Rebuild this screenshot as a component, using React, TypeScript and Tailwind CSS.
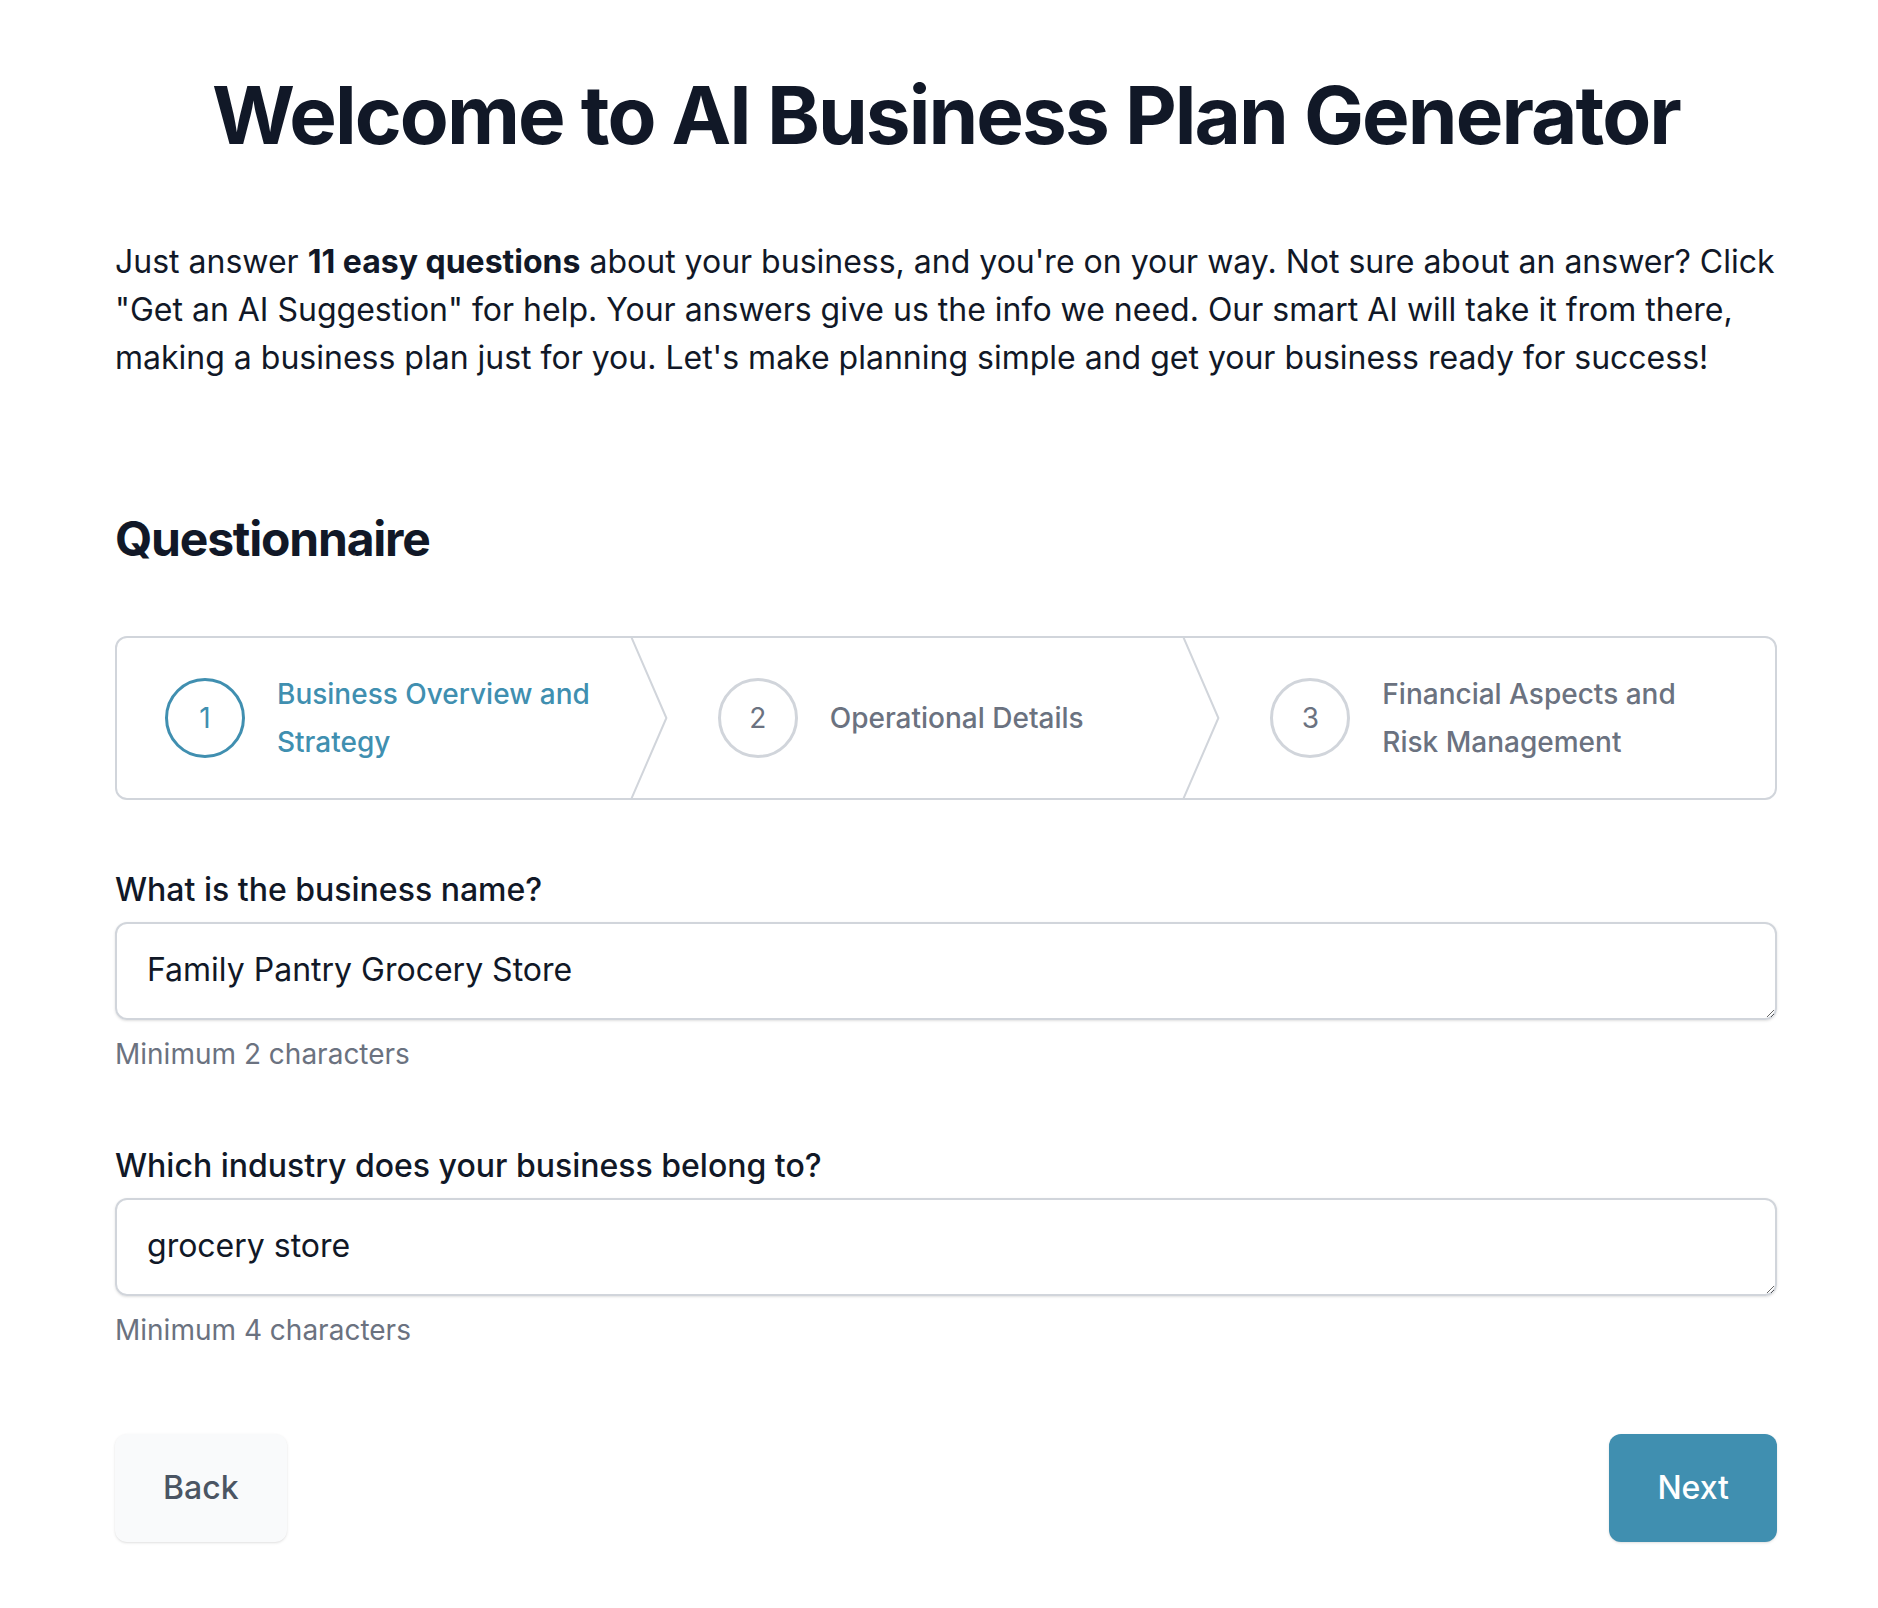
import React from "react";

const font = { fontFamily: "Inter, 'Noto Sans', sans-serif" };

function Chevron() {
  return (
    <div className="absolute top-0 right-0 h-full w-[40px]" aria-hidden="true">
      <svg className="h-full w-full text-[#d1d5db]" viewBox="0 0 22 80" fill="none" preserveAspectRatio="none">
        <path d="M0 -2L20 40L0 82" vectorEffect="non-scaling-stroke" stroke="currentColor" strokeWidth={2} strokeLinejoin="round" />
      </svg>
    </div>
  );
}

function Step({ n, label, active, last }: { n: number; label: string; active?: boolean; last?: boolean }) {
  return (
    <li className="relative flex flex-1">
      <div className="flex items-center px-[48px] py-[32px]">
        <span
          className={
            active
              ? "flex h-[80px] w-[80px] shrink-0 items-center justify-center rounded-full border-[3px] border-[#408fb0] text-[28px] text-[#408fb0]"
              : "flex h-[80px] w-[80px] shrink-0 items-center justify-center rounded-full border-[3px] border-[#d1d5db] text-[28px] text-[#6b7280]"
          }
        >
          {n}
        </span>
        <span
          className={
            active
              ? "ml-[32px] max-w-[340px] text-[28px] font-medium leading-[48px] text-[#408fb0]"
              : "ml-[32px] max-w-[340px] text-[28px] font-medium leading-[48px] text-[#6b7280]"
          }
        >
          {label}
        </span>
      </div>
      {!last && <Chevron />}
    </li>
  );
}

function Field({ label, value, help }: { label: string; value: string; help: string }) {
  return (
    <div className="flex flex-col">
      <label className="text-[32px] font-medium leading-[40px] text-[#111827]">{label}</label>
      <textarea
        rows={1}
        defaultValue={value}
        className="mt-[12px] h-[98px] w-full rounded-[12px] border-2 border-[#d1d5db] px-[30px] py-[24px] text-[32px] leading-[44px] text-[#111827] shadow-sm outline-none"
        style={font}
      />
      <p className="mt-[14px] text-[28px] leading-[40px] text-[#6b7280]">{help}</p>
    </div>
  );
}

export default function App() {
  return (
    <div className="min-h-[1608px] bg-white pl-[115px] pr-[101px] pt-[75px] pb-[68px]" style={font}>
      <h1 className="text-center text-[80px] font-bold leading-[80px] tracking-[-0.024em] text-[#111827]">
        Welcome to AI Business Plan Generator
      </h1>
      <p className="mt-[83px] text-[32px] leading-[48px] text-[#111827]">
        Just answer <strong className="font-bold">11 easy questions</strong> about your business, and you're on your way. Not sure about an answer? Click "Get an AI Suggestion" for help. Your answers give us the info we need. Our smart AI will take it from there, making a business plan just for you. Let's make planning simple and get your business ready for success!
      </p>
      <h2 className="mt-[129px] text-[48px] font-bold leading-[56px] tracking-[-0.025em] text-[#111827]">Questionnaire</h2>
      <ol className="mt-[69px] flex rounded-[12px] border-2 border-[#d1d5db]">
        <Step n={1} label="Business Overview and Strategy" active />
        <Step n={2} label="Operational Details" />
        <Step n={3} label="Financial Aspects and Risk Management" last />
      </ol>
      <div className="mt-[70px]">
        <Field label="What is the business name?" value="Family Pantry Grocery Store" help="Minimum 2 characters" />
      </div>
      <div className="mt-[72px]">
        <Field label="Which industry does your business belong to?" value="grocery store" help="Minimum 4 characters" />
      </div>
      <div className="mt-[84px] flex items-center justify-between">
        <button className="h-[108px] rounded-[12px] bg-[#f9fafb] px-[48px] text-[32px] font-medium text-[#4b5563] shadow-sm">
          Back
        </button>
        <button className="h-[108px] rounded-[12px] bg-[#408fb0] px-[48px] text-[32px] font-medium text-white shadow-sm">
          Next
        </button>
      </div>
    </div>
  );
}
